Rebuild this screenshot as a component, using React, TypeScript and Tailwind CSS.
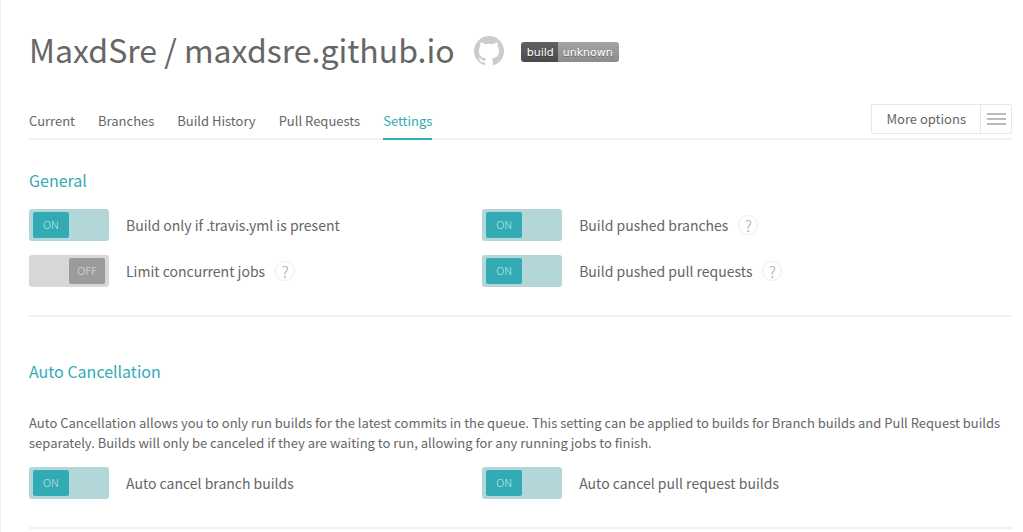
import { useId, useState } from "react";

const TABS = ["Current", "Branches", "Build History", "Pull Requests", "Settings"];

function GithubMark() {
  return (
    <svg viewBox="0 0 30 30" className="size-[30px]" aria-hidden="true">
      <circle cx="15" cy="15" r="15" fill="#cccccc" />
      <path
        fill="#ffffff"
        d="M11.1 30.5v-4.200c-3.600.700-4.700-.900-5.400-2.400-.4-.9-1-1.500-1.600-1.900.9-.5 2.200-.1 3 1 .9 1.400 2 2.100 4.100 1.500.1-1 .5-1.700 1-2.200-4-.5-7.300-2.100-7.300-7.400 0-1.700.5-3 1.500-4.100-.4-1.300-.3-2.800.2-4.200 1.400-.1 2.900.6 4.300 1.600 2.700-.7 5.500-.7 8.200 0 1.400-1 2.900-1.700 4.300-1.600.5 1.400.6 2.900.2 4.200 1 1.100 1.500 2.400 1.500 4.100 0 5.300-3.300 6.900-7.300 7.400.7.600 1 1.600 1 2.900v5.300z"
      />
    </svg>
  );
}

function Setting({ label, initial = true, help = false }: { label: string; initial?: boolean; help?: boolean }) {
  const [on, setOn] = useState(initial);
  const id = useId();
  return (
    <div className="flex h-8 items-center">
      <button
        id={id}
        type="button"
        role="switch"
        aria-checked={on}
        onClick={() => setOn(!on)}
        className={`flex h-8 w-20 shrink-0 rounded-[3px] px-1 py-[3px] ${on ? "justify-start bg-[#b3d6d9]" : "justify-end bg-[#d7d7d7]"}`}
      >
        <span
          className={`h-[26px] w-9 rounded-[2px] text-center text-[11px] leading-6 font-light ${on ? "bg-[#32abb4] text-[#c4e6e9]" : "bg-[#9b9b9b] text-[#dddddd]"}`}
        >
          {on ? "ON" : "OFF"}
        </span>
      </button>
      <label htmlFor={id} className="ml-[17px] text-[14px] leading-8">
        {label}
      </label>
      {help && (
        <button
          type="button"
          aria-label={`Help: ${label}`}
          className="ml-2.5 size-5 rounded-full border border-[#eeeeee] text-center text-[16px] leading-4 font-light text-[#a5a5a5]"
        >
          ?
        </button>
      )}
    </div>
  );
}

export default function App() {
  return (
    <main className="min-h-screen border-l border-[#f1f1f1] bg-white pr-[11px] pl-7 font-['Noto_Sans_CJK_SC',sans-serif] text-[#666666]">
      <header className="flex h-[104px] items-start pt-7">
        <h1 className="text-[32px] leading-[42px]">MaxdSre / maxdsre.github.io</h1>
        <a href="#github" aria-label="View on GitHub" className="mt-2 ml-[19px]">
          <GithubMark />
        </a>
        <a
          href="#status"
          className="mt-3.5 ml-[17px] flex h-5 overflow-hidden rounded-[3px] font-['DejaVu_Sans',sans-serif] text-[11px] leading-[22px] text-white [text-shadow:0_1px_0_rgba(1,1,1,0.3)]"
        >
          <span className="bg-linear-to-b from-[#626262] to-[#4a4a4a] pr-1 pl-1.5">build</span>
          <span className="bg-linear-to-b from-[#a4a4a4] to-[#8c8c8c] pr-1.5 pl-[5px]">unknown</span>
        </a>
      </header>

      <div className="flex h-9 items-start justify-between border-b-2 border-[#f1f1f1]">
        <nav className="flex h-9 gap-[23px] text-[13px]">
          {TABS.map((tab) => (
            <a
              key={tab}
              href={`#${tab}`}
              className={`h-9 border-b-2 leading-[34px] ${tab === "Settings" ? "border-[#32abb4] text-[#32abb4]" : "border-transparent"}`}
            >
              {tab}
            </a>
          ))}
        </nav>
        <button type="button" className="flex h-[30px] items-stretch rounded-[2px] border border-[#e7e7e7] text-[13px] leading-7">
          <span className="px-3.5">More options</span>
          <span className="flex w-[31px] flex-col items-center justify-center gap-[3px] border-l border-[#e7e7e7]">
            <span className="h-0.5 w-[19px] bg-[#bbbbbb]" />
            <span className="h-0.5 w-[19px] bg-[#bbbbbb]" />
            <span className="h-0.5 w-[19px] bg-[#bbbbbb]" />
          </span>
        </button>
      </div>

      <section className="border-b-2 border-[#f1f1f1] pt-7 pb-7">
        <h2 className="text-[16px] leading-6 text-[#32abb4]">General</h2>
        <div className="mt-[17px] grid grid-cols-[46.1%_1fr] gap-y-3.5">
          <Setting label="Build only if .travis.yml is present" />
          <Setting label="Build pushed branches" help />
          <Setting label="Limit concurrent jobs" initial={false} help />
          <Setting label="Build pushed pull requests" help />
        </div>
      </section>

      <section className="border-b-2 border-[#f1f1f1] pt-[42px] pb-7">
        <h2 className="text-[16px] leading-6 text-[#32abb4]">Auto Cancellation</h2>
        <p className="mt-[30px] text-[13px] leading-5">
          Auto Cancellation allows you to only run builds for the latest commits in the queue. This setting can be
          applied to builds for Branch builds and Pull Request builds separately. Builds will only be canceled if they
          are waiting to run, allowing for any running jobs to finish.
        </p>
        <div className="mt-3.5 grid grid-cols-[46.1%_1fr]">
          <Setting label="Auto cancel branch builds" />
          <Setting label="Auto cancel pull request builds" />
        </div>
      </section>
    </main>
  );
}
